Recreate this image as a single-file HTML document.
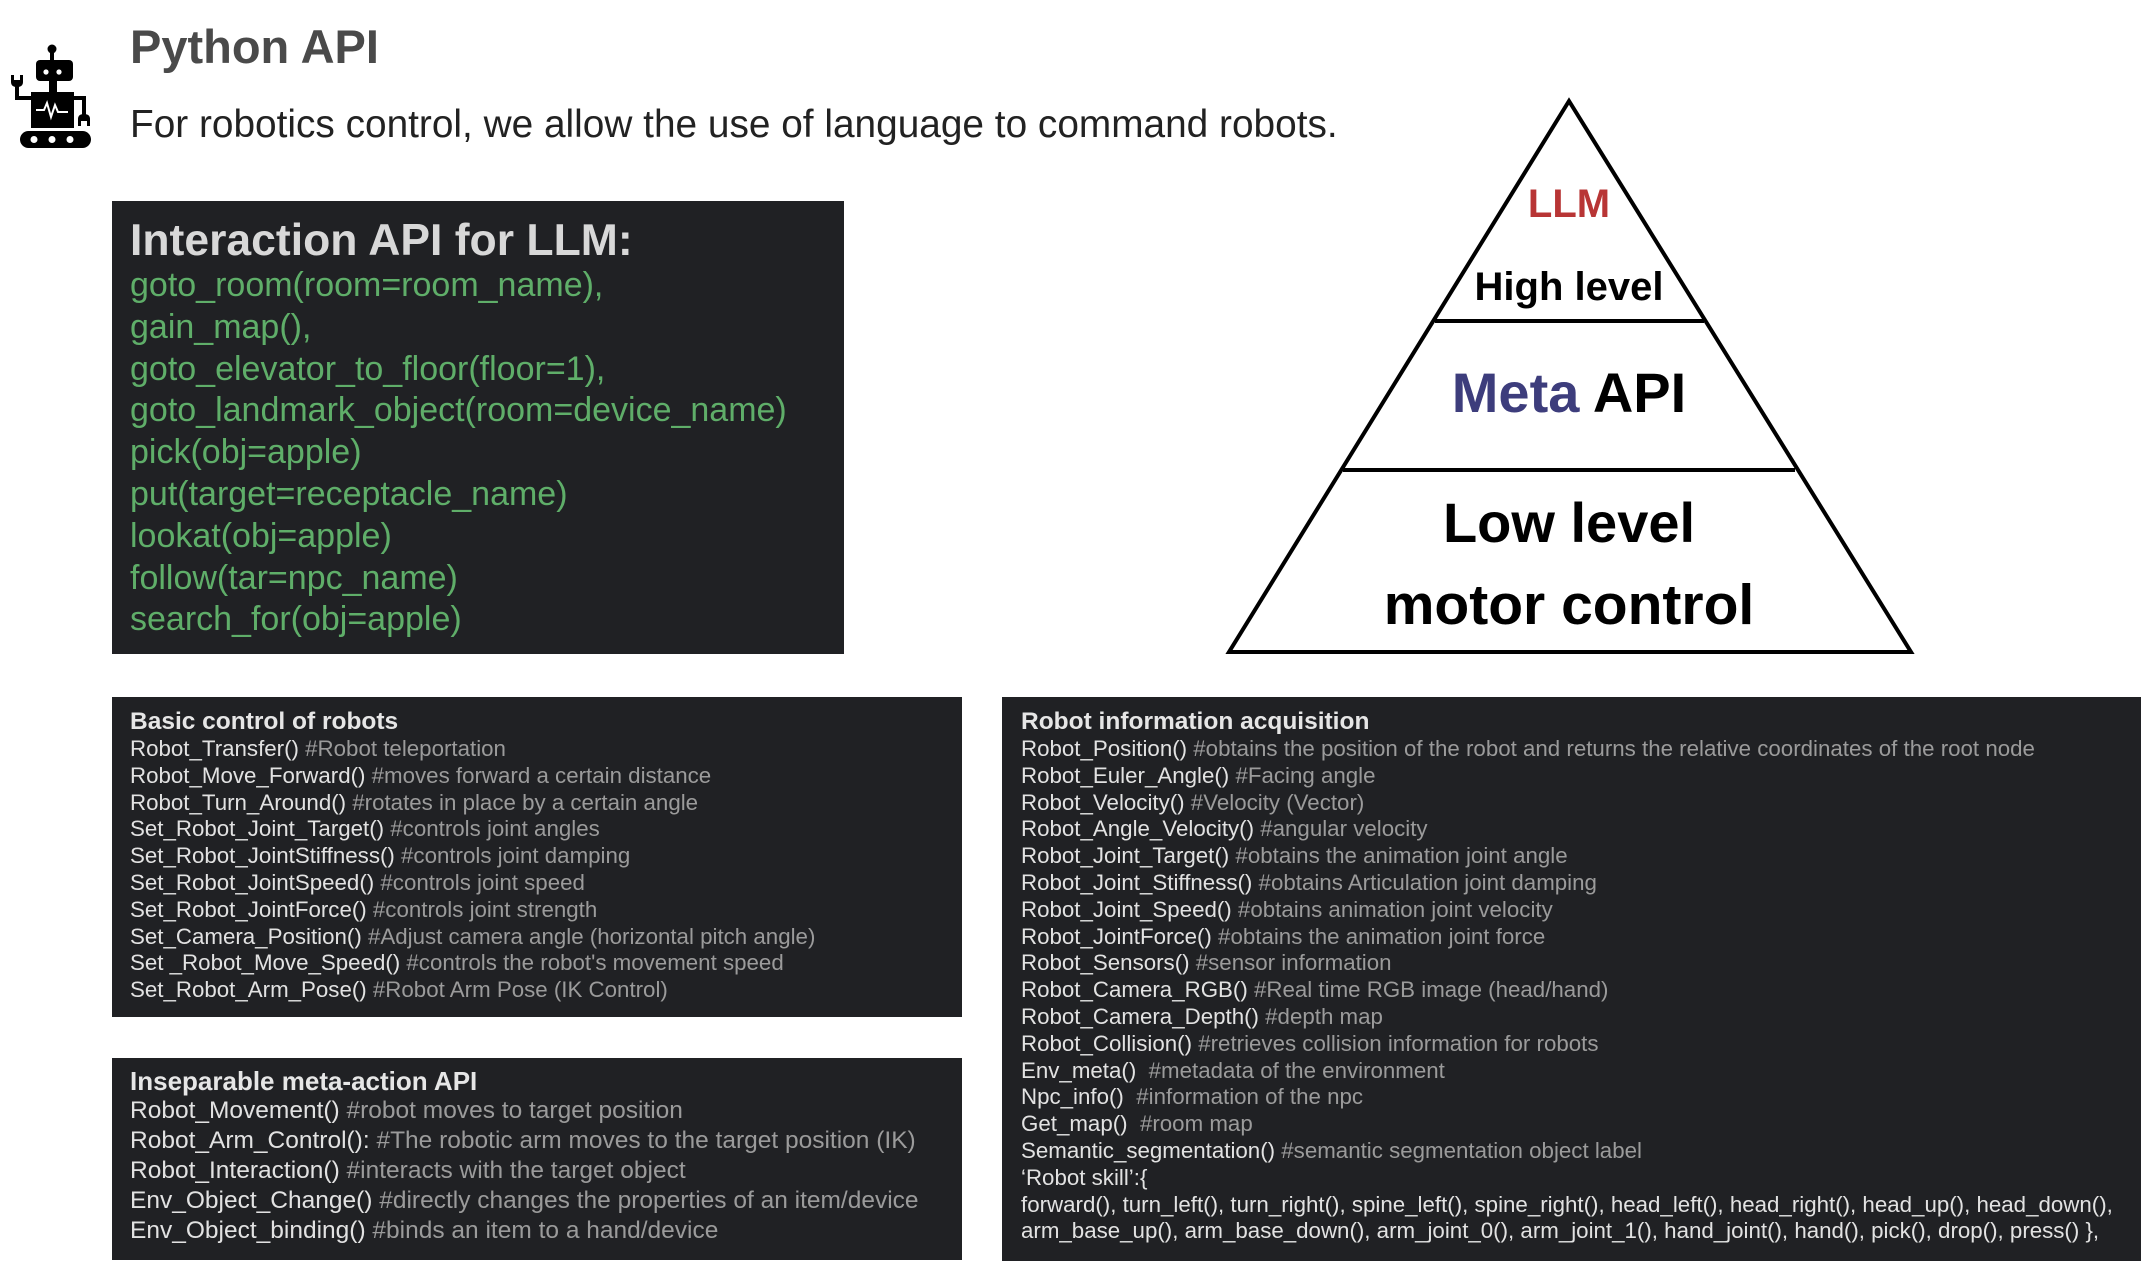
<!DOCTYPE html>
<html><head><meta charset="utf-8"><style>
*{margin:0;padding:0;box-sizing:border-box}
body{width:2152px;height:1260px;background:#fff;position:relative;overflow:hidden;font-family:"Liberation Sans",sans-serif}
.abs{position:absolute}
.box{position:absolute;background:#202124;color:#e2e2e2;font-family:"Liberation Sans",sans-serif}
.box .t{font-weight:bold;color:#e6e6e6;white-space:nowrap}
.box .l{white-space:nowrap}
.c{color:#9b9b9b}
.g{color:#5fae69}
</style></head><body>
<svg class="abs" style="left:0;top:30px" width="110" height="130" viewBox="0 30 110 130">
<circle cx="52" cy="49" r="4.5" fill="#000"/>
<rect x="50" y="49" width="4" height="12" fill="#000"/>
<rect x="36" y="60" width="37" height="21" rx="4" fill="#000"/>
<circle cx="46" cy="72" r="2.6" fill="#fff"/><circle cx="59" cy="72" r="2.6" fill="#fff"/>
<rect x="49" y="80" width="8" height="13" fill="#000"/>
<rect x="31" y="92" width="43" height="36" fill="#000"/>
<polyline points="36,110 44,110 47,103 51,117 55,105 58,112 68,112" fill="none" stroke="#fff" stroke-width="2"/>
<polyline points="17,84 17,98 31,98" fill="none" stroke="#000" stroke-width="4"/>
<path d="M11,75 L11,82 Q11,87 17,87 Q23,87 23,82 L23,75 L20,75 L20,80 L14,80 L14,75 Z" fill="#000"/>
<polyline points="74,98 84,98 84,116" fill="none" stroke="#000" stroke-width="4"/>
<path d="M78,126 L78,119 Q78,114 84,114 Q90,114 90,119 L90,126 L87,126 L87,121 L81,121 L81,126 Z" fill="#000"/>
<rect x="20" y="131" width="71" height="17" rx="8.5" fill="#000"/>
<circle cx="34" cy="139.5" r="3.5" fill="#fff"/><circle cx="52" cy="139.5" r="3.5" fill="#fff"/><circle cx="70" cy="139.5" r="3.5" fill="#fff"/>
</svg>
<div class="abs" style="left:130px;top:19px;font-size:47px;font-weight:bold;color:#4a4a4a">Python API</div>
<div class="abs" style="left:130px;top:103px;font-size:38.8px;color:#222;white-space:nowrap">For robotics control, we allow the use of language to command robots.</div>

<div class="box" style="left:112px;top:201px;width:732px;height:453px;padding:15px 0 0 18px">
<div class="t" style="font-size:44.5px;line-height:50px;color:#d8d8d8">Interaction API for LLM:</div>
<div class="g" style="font-size:34px;line-height:41.8px;margin-top:-1px">goto_room(room=room_name),<br>gain_map(),<br>goto_elevator_to_floor(floor=1),<br>goto_landmark_object(room=device_name)<br>pick(obj=apple)<br>put(target=receptacle_name)<br>lookat(obj=apple)<br>follow(tar=npc_name)<br>search_for(obj=apple)</div>
</div>

<svg class="abs" style="left:0;top:0" width="2152" height="1260">
<polygon points="1569,101 1229,652 1911,652" fill="none" stroke="#000" stroke-width="4" stroke-linejoin="miter"/>
<line x1="1435" y1="321" x2="1704" y2="321" stroke="#000" stroke-width="4"/>
<line x1="1343" y1="470" x2="1795" y2="470" stroke="#000" stroke-width="4"/>
<g font-family="Liberation Sans, sans-serif" text-anchor="middle">
<text x="1569" y="217" font-size="40" font-weight="bold" fill="#b83535">LLM</text>
<text x="1569" y="300" font-size="40" font-weight="bold" fill="#000">High level</text>
<text x="1569" y="412" font-size="56" font-weight="bold"><tspan fill="#3d3d7c">Meta</tspan><tspan fill="#000"> API</tspan></text>
<text x="1569" y="542" font-size="56" font-weight="bold" fill="#000">Low level</text>
<text x="1569" y="624" font-size="57" font-weight="bold" fill="#000">motor control</text>
</g>
</svg>

<div class="box" style="left:112px;top:697px;width:850px;height:320px;padding:11px 0 0 18px">
<div class="t" style="font-size:24.5px;line-height:28px">Basic control of robots</div>
<div class="l" style="font-size:22.3px;line-height:26.8px">Robot_Transfer() <span class="c">#Robot teleportation</span><br>Robot_Move_Forward() <span class="c">#moves forward a certain distance</span><br>Robot_Turn_Around() <span class="c">#rotates in place by a certain angle</span><br>Set_Robot_Joint_Target() <span class="c">#controls joint angles</span><br>Set_Robot_JointStiffness() <span class="c">#controls joint damping</span><br>Set_Robot_JointSpeed() <span class="c">#controls joint speed</span><br>Set_Robot_JointForce() <span class="c">#controls joint strength</span><br>Set_Camera_Position() <span class="c">#Adjust camera angle (horizontal pitch angle)</span><br>Set _Robot_Move_Speed() <span class="c">#controls the robot's movement speed</span><br>Set_Robot_Arm_Pose() <span class="c">#Robot Arm Pose (IK Control)</span></div>
</div>

<div class="box" style="left:112px;top:1058px;width:850px;height:202px;padding:8px 0 0 18px">
<div class="t" style="font-size:26px;line-height:30px">Inseparable meta-action API</div>
<div class="l" style="font-size:24.5px;line-height:30px">Robot_Movement() <span class="c">#robot moves to target position</span><br>Robot_Arm_Control(): <span class="c">#The robotic arm moves to the target position (IK)</span><br>Robot_Interaction() <span class="c">#interacts with the target object</span><br>Env_Object_Change() <span class="c">#directly changes the properties of an item/device</span><br>Env_Object_binding() <span class="c">#binds an item to a hand/device</span></div>
</div>

<div class="box" style="left:1002px;top:697px;width:1139px;height:564px;padding:11px 0 0 19px">
<div class="t" style="font-size:24.5px;line-height:28px">Robot information acquisition</div>
<div class="l" style="font-size:22.3px;line-height:26.8px">Robot_Position() <span class="c">#obtains the position of the robot and returns the relative coordinates of the root node</span><br>Robot_Euler_Angle() <span class="c">#Facing angle</span><br>Robot_Velocity() <span class="c">#Velocity (Vector)</span><br>Robot_Angle_Velocity() <span class="c">#angular velocity</span><br>Robot_Joint_Target() <span class="c">#obtains the animation joint angle</span><br>Robot_Joint_Stiffness() <span class="c">#obtains Articulation joint damping</span><br>Robot_Joint_Speed() <span class="c">#obtains animation joint velocity</span><br>Robot_JointForce() <span class="c">#obtains the animation joint force</span><br>Robot_Sensors() <span class="c">#sensor information</span><br>Robot_Camera_RGB() <span class="c">#Real time RGB image (head/hand)</span><br>Robot_Camera_Depth() <span class="c">#depth map</span><br>Robot_Collision() <span class="c">#retrieves collision information for robots</span><br>Env_meta()&nbsp; <span class="c">#metadata of the environment</span><br>Npc_info()&nbsp; <span class="c">#information of the npc</span><br>Get_map()&nbsp; <span class="c">#room map</span><br>Semantic_segmentation() <span class="c">#semantic segmentation object label</span><br>‘Robot skill’:{<br>forward(), turn_left(), turn_right(), spine_left(), spine_right(), head_left(), head_right(), head_up(), head_down(),<br>arm_base_up(), arm_base_down(), arm_joint_0(), arm_joint_1(), hand_joint(), hand(), pick(), drop(), press() },</div>
</div>
</body></html>
